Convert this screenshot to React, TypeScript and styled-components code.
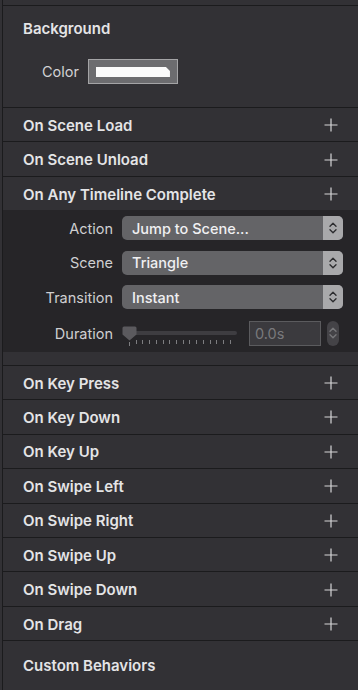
import styled, { createGlobalStyle } from "styled-components";

// page reset + panel background
const Global = createGlobalStyle`
  html, body {
    margin: 0;
    padding: 0;
    background: #323135;
  }
  body {
    font-family: Inter, "Noto Sans", "Liberation Sans", sans-serif;
    -webkit-font-smoothing: antialiased;
  }
`;

const Panel = styled.div`
  width: 356px;
  height: 690px;
  overflow: hidden;
  margin-left: 2px;
  border-left: 1px solid #1b1b1d;
  background: #323135;
  display: flex;
  flex-direction: column;
  box-sizing: border-box;
`;

const TopStrip = styled.div`
  height: 5px;
  border-bottom: 1px solid #1b1b1d;
  flex-shrink: 0;
`;

const Section = styled.div`
  height: 102px;
  border-bottom: 1px solid #1b1b1d;
  padding: 14px 0 0 20px;
  box-sizing: border-box;
  flex-shrink: 0;
  display: flex;
  flex-direction: column;
  gap: 21px;
`;

const Title = styled.div`
  color: #e4e4e6;
  font-size: 15px;
  font-weight: 600;
  line-height: 18px;
`;

const ColorRow = styled.div`
  display: flex;
  align-items: center;
  gap: 9px;
  padding-left: 19px;
`;

const Label = styled.span`
  color: #d2d2d4;
  font-size: 14.5px;
  font-weight: 400;
`;

const Swatch = styled.div`
  width: 90px;
  height: 25px;
  box-sizing: border-box;
  border: 1px solid #a4a4a6;
  background: #6c6c6f;
  padding: 7px 7px 0 7px;
`;

const SwatchFill = styled.div`
  height: 10px;
  background: #fafafa;
  clip-path: polygon(0 0, calc(100% - 4px) 0, 100% 4px, 100% 100%, 0 100%);
`;

const Row = styled.div<{ $tall?: boolean; $last?: boolean }>`
  height: ${(p) => (p.$tall ? "47px" : "32.45px")};
  flex-shrink: 0;
  border-bottom: ${(p) => (p.$last ? "none" : "1px solid #1b1b1d")};
  display: flex;
  align-items: center;
  justify-content: space-between;
  padding: 1px 20px 0 20px;
  box-sizing: content-box;
  color: #e4e4e6;
  font-size: 15px;
  font-weight: 600;
`;

const Expanded = styled.div`
  flex-shrink: 0;
  background: #262528;
  padding: 6px 0 6px 0;
  display: flex;
  flex-direction: column;
  gap: 10.5px;
`;

const ExpandedFoot = styled.div`
  height: 13px;
  border-bottom: 1px solid #1b1b1d;
  flex-shrink: 0;
`;

const FieldRow = styled.div<{ $gapAbove?: boolean }>`
  display: grid;
  grid-template-columns: 110px 1fr;
  column-gap: 9px;
  align-items: center;
  padding-right: 15px;
  height: ${(p) => (p.$gapAbove ? "25px" : "24px")};
  margin-top: ${(p) => (p.$gapAbove ? "1px" : "0")};
`;

const FieldLabel = styled.span`
  text-align: right;
  color: #cfcfd1;
  font-size: 14.5px;
`;

const Select = styled.div`
  height: 24px;
  border-radius: 5px;
  background: #646467;
  display: flex;
  align-items: stretch;
  overflow: hidden;
`;

const SelectText = styled.span`
  flex: 1;
  color: #f0f0f2;
  font-size: 14.5px;
  font-weight: 500;
  padding-left: 10px;
  display: flex;
  align-items: center;
`;

const Stepper = styled.span`
  width: 20px;
  background: #a9a9ab;
  display: flex;
  align-items: center;
  justify-content: center;
`;

const DurationWrap = styled.div`
  display: flex;
  align-items: center;
  gap: 12px;
`;

const Slider = styled.div`
  position: relative;
  width: 115px;
  height: 25px;
`;

const Track = styled.div`
  position: absolute;
  left: 10px;
  right: 0;
  top: 10px;
  height: 4px;
  border-radius: 2px;
  background: #3e3d41;
`;

const Thumb = styled.svg`
  position: absolute;
  left: 0;
  top: 5px;
`;

const Ticks = styled.div`
  position: absolute;
  left: 7px;
  top: 19px;
  width: 102px;
  display: flex;
  justify-content: space-between;
`;

const Tick = styled.span<{ $first?: boolean }>`
  width: 1px;
  height: 4px;
  margin-top: ${(p) => (p.$first ? "2px" : "0")};
  background: #7d7d80;
`;

const NumField = styled.div`
  width: 72px;
  height: 25px;
  box-sizing: border-box;
  border: 1px solid #5b5b5e;
  background: #3b3a3e;
  color: #79797c;
  font-size: 14.5px;
  padding-left: 5px;
  display: flex;
  align-items: center;
`;

const SmallStepper = styled.div`
  width: 12px;
  height: 25px;
  border-radius: 6px;
  background: #444347;
  display: flex;
  align-items: center;
  justify-content: center;
  margin-left: -6px;
`;

const Chevrons = ({ color }: { color: string }) => (
  <svg width="10" height="16" viewBox="0 0 10 16" fill="none">
    <path d="M2 6.2 5 3.2 8 6.2" stroke={color} strokeWidth="1.4" strokeLinecap="round" strokeLinejoin="round" />
    <path d="M2 9.8 5 12.8 8 9.8" stroke={color} strokeWidth="1.4" strokeLinecap="round" strokeLinejoin="round" />
  </svg>
);

const Plus = () => (
  <svg width="14" height="14" viewBox="0 0 14 14">
    <path d="M7 0.5V13.5M0.5 7H13.5" stroke="#d6d6d8" strokeWidth="1.2" />
  </svg>
);

const topEvents = ["On Scene Load", "On Scene Unload"];
const lowerEvents = [
  "On Key Press",
  "On Key Down",
  "On Key Up",
  "On Swipe Left",
  "On Swipe Right",
  "On Swipe Up",
  "On Swipe Down",
  "On Drag",
];

const selects = [
  { label: "Action", value: "Jump to Scene..." },
  { label: "Scene", value: "Triangle" },
  { label: "Transition", value: "Instant" },
];

export default function App() {
  return (
    <>
      <Global />
      <Panel>
        <TopStrip />
        <Section>
          <Title>Background</Title>
          <ColorRow>
            <Label>Color</Label>
            <Swatch>
              <SwatchFill />
            </Swatch>
          </ColorRow>
        </Section>

        {topEvents.map((e) => (
          <Row key={e}>
            {e}
            <Plus />
          </Row>
        ))}
        <Row $last>
          On Any Timeline Complete
          <Plus />
        </Row>

        <Expanded>
          {selects.map((s) => (
            <FieldRow key={s.label}>
              <FieldLabel>{s.label}</FieldLabel>
              <Select>
                <SelectText>{s.value}</SelectText>
                <Stepper>
                  <Chevrons color="#2e2e30" />
                </Stepper>
              </Select>
            </FieldRow>
          ))}
          <FieldRow $gapAbove>
            <FieldLabel>Duration</FieldLabel>
            <DurationWrap>
              <Slider>
                <Track />
                <Thumb width="15" height="15" viewBox="0 0 15 15">
                  <path d="M2 0.5H13A1.5 1.5 0 0 1 14.5 2V8.5L7.5 14.5 0.5 8.5V2A1.5 1.5 0 0 1 2 0.5Z" fill="#5b5a5e" />
                </Thumb>
                <Ticks>
                  {Array.from({ length: 16 }).map((_, i) => (
                    <Tick key={i} $first={i === 0} />
                  ))}
                </Ticks>
              </Slider>
              <NumField>0.0s</NumField>
              <SmallStepper>
                <Chevrons color="#77777a" />
              </SmallStepper>
            </DurationWrap>
          </FieldRow>
        </Expanded>
        <ExpandedFoot />

        {lowerEvents.map((e) => (
          <Row key={e}>
            {e}
            <Plus />
          </Row>
        ))}
        <Row $tall $last>
          Custom Behaviors
        </Row>
      </Panel>
    </>
  );
}
